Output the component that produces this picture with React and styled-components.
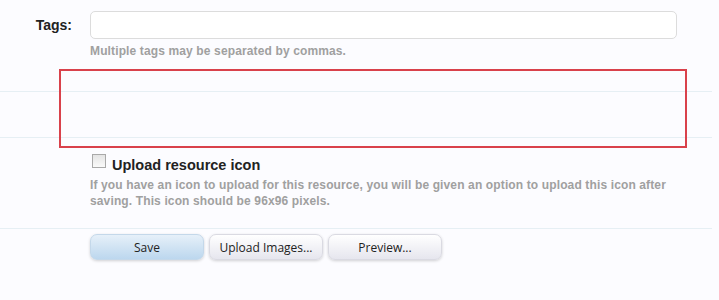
import React from "react";
import styled, { createGlobalStyle } from "styled-components";

const Global = createGlobalStyle`
  body {
    margin: 0;
    background: #fcfcff;
    font-family: "Liberation Sans", Arial, sans-serif;
  }
`;

const Form = styled.div`
  position: relative;
  width: 712px;
`;

const Row = styled.div`
  display: flex;
  padding: ${(p) => p.pad || "0"};
  min-height: ${(p) => p.h || 0}px;
  box-sizing: border-box;
  border-bottom: ${(p) => (p.line ? "1px solid #e6eff4" : "none")};
`;

const Label = styled.div`
  width: 72px;
  flex-shrink: 0;
  text-align: right;
  font-weight: bold;
  font-size: 14px;
  color: #222;
  padding-top: 6px;
`;

const Controls = styled.div`
  margin-left: ${(p) => p.offset || 18}px;
  display: flex;
  flex-direction: column;
`;

const TextInput = styled.input`
  width: 587px;
  height: 28px;
  box-sizing: border-box;
  border: 1px solid #dcdcdc;
  border-radius: 5px;
  background: #fff;
  outline: none;
`;

const Hint = styled.div`
  margin-top: ${(p) => p.top || 4}px;
  font-size: 12px;
  letter-spacing: 0.13px;
  font-weight: bold;
  color: #a0a0a0;
  line-height: 16px;
  width: 600px;
`;

const CheckLabel = styled.label`
  display: flex;
  align-items: flex-start;
  gap: 6px;
  font-weight: bold;
  font-size: 14.5px;
  line-height: 18px;
  color: #222;
`;

const Box = styled.span`
  width: 12px;
  height: 12px;
  border: 1px solid #a9a9a9;
  background: linear-gradient(#e4e4e4, #fafafa);
  margin-left: 2px;
  flex-shrink: 0;
`;

const CheckText = styled.span`
  margin-top: 2px;
`;

const Buttons = styled.div`
  display: flex;
  gap: 5px;
`;

const Button = styled.button`
  width: 114px;
  height: 26px;
  border-radius: 7px;
  border: 1px solid ${(p) => (p.primary ? "#c4d8ea" : "#dadae2")};
  background: ${(p) =>
    p.primary
      ? "linear-gradient(#e6f0f9, #bcd7ee)"
      : "linear-gradient(#ffffff, #e6e6ee)"};
  box-shadow: 0 1px 3px rgba(0, 0, 0, 0.18);
  font-family: "Open Sans", "Liberation Sans", sans-serif;
  font-size: 12px;
  color: #222;
  padding: 0;
`;

const Highlight = styled.div`
  position: absolute;
  left: 59px;
  top: 69px;
  width: 628px;
  height: 79px;
  box-sizing: border-box;
  border: 2px solid #d9414b;
`;

export default function App() {
  return (
    <>
      <Global />
      <Form>
        <Row pad="11px 0 0" h={92} line>
          <Label>Tags:</Label>
          <Controls>
            <TextInput />
            <Hint top={4}>Multiple tags may be separated by commas.</Hint>
          </Controls>
        </Row>
        <Row h={46} line />
        <Row pad="16px 0 0" h={91} line>
          <Controls offset={90}>
            <CheckLabel>
              <Box />
              <CheckText>Upload resource icon</CheckText>
            </CheckLabel>
            <Hint top={3}>
              If you have an icon to upload for this resource, you will be given an option to upload this icon after saving. This icon should be 96x96 pixels.
            </Hint>
          </Controls>
        </Row>
        <Row pad="5px 0 0" h={40}>
          <Controls offset={90}>
            <Buttons>
              <Button primary>Save</Button>
              <Button>Upload Images...</Button>
              <Button>Preview...</Button>
            </Buttons>
          </Controls>
        </Row>
        <Highlight />
      </Form>
    </>
  );
}
